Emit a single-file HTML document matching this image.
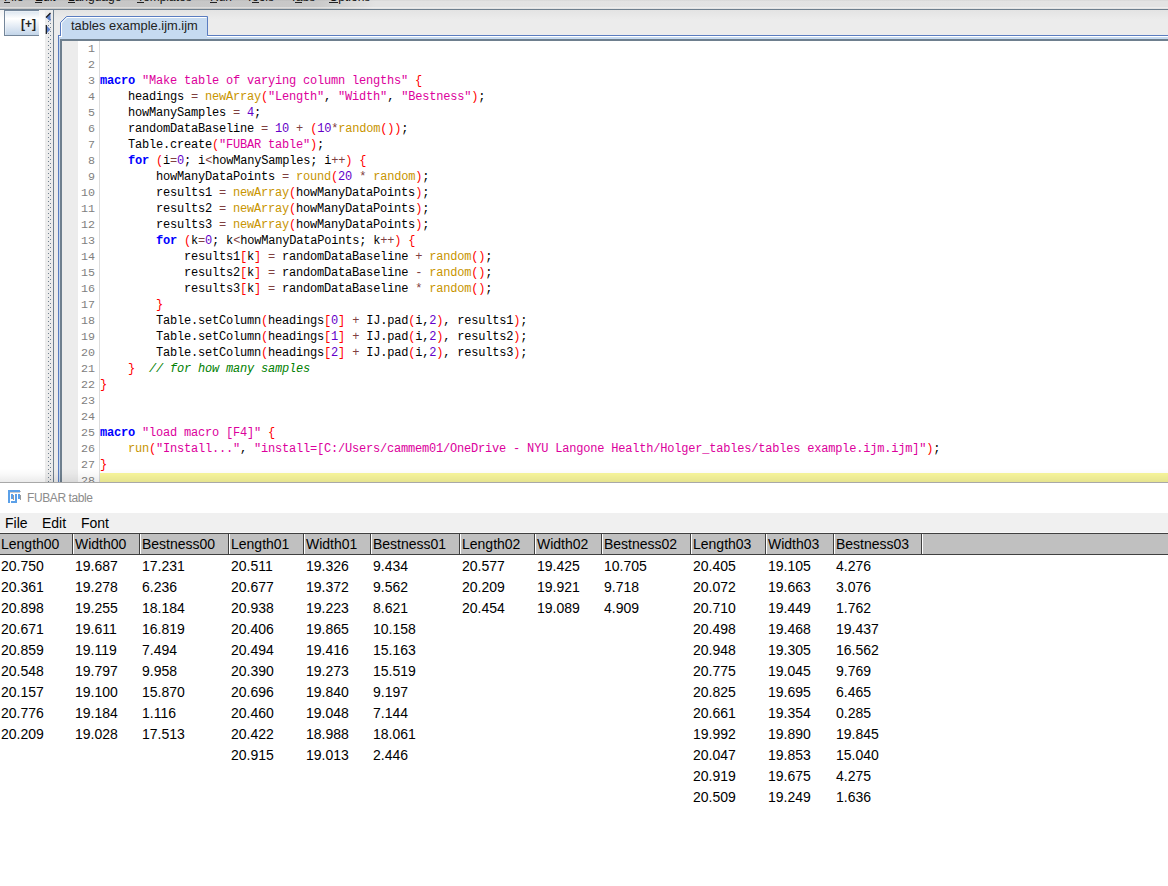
<!DOCTYPE html>
<html><head><meta charset="utf-8">
<style>
*{margin:0;padding:0;box-sizing:border-box}
html,body{width:1168px;height:886px;overflow:hidden;background:#fff;position:relative;font-family:"Liberation Sans",sans-serif}
.a{position:absolute}
#menubar{left:0;top:0;width:1168px;height:9px;background:linear-gradient(to right,#c6c6c6 0,#c8c8c8 315px,#e2e2e2 375px,#e3e3e3 100%);overflow:hidden}
#menubar b{position:absolute;left:0;width:1168px;height:1px}
#menubar span{position:absolute;top:-10px;font-size:12px;line-height:normal;color:#111;white-space:pre}
#menubar i{position:absolute;top:2px;height:1px;background:#222}
#topline{left:0;top:9px;width:1168px;height:1px;background:#6e7f8e}
#leftpanel{left:0;top:10px;width:45px;height:472px;background:linear-gradient(#f2f2f2,#fff 10px)}
#plusbtn{left:4px;top:10px;width:35px;height:26px;border:1px solid #74869a;border-right:none;background:linear-gradient(#dae4ef,#ffffff 32%,#c3d5e9);box-shadow:inset 1px 1px 0 rgba(255,255,255,0.35)}
#plustxt{left:21px;top:17px;font-size:12px;font-weight:bold;color:#222}
#splitter{left:45px;top:10px;width:8px;height:472px;background:#ececec}
#splitline{left:53px;top:10px;width:1px;height:472px;background:#6e7f8e}
#tabarea{left:54px;top:10px;width:1114px;height:25px;background:linear-gradient(#e3e3e3,#ececec 40%)}
#tabside{left:54px;top:35px;width:4px;height:447px;background:#ececec}
#tab{left:60px;top:16px;width:148px;height:20px}
#tabtxt{left:71px;top:18px;font-size:12.9px;color:#222;white-space:pre}
#edtop{left:58px;top:35px;width:1110px;height:1px;background:#5a7cc0}
#edleft{left:58px;top:35px;width:1px;height:447px;background:#5a7cc0}
#edwhite{left:59px;top:36px;width:1109px;height:1px;background:#fff}
#edlb{left:59px;top:37px;width:1109px;height:2px;background:#c6daf0}
#edlb2{left:59px;top:36px;width:1px;height:446px;background:#c6daf0}
#eddark{left:60px;top:39px;width:1108px;height:2px;background:#6e7f8e}
#eddark2{left:60px;top:39px;width:2px;height:443px;background:#6e7f8e}
#gutter{left:62px;top:41px;width:16px;height:441px;background:#ececec}
#lnarea{left:78px;top:41px;width:21px;height:441px;background:#fff}
#lnsep{left:99px;top:41px;width:1px;height:441px;background:#dcdcdc}
#curline{left:100px;top:473px;width:1068px;height:9px;background:#f9f79c}
#nums{left:60px;top:41px;width:35px;text-align:right;font-family:"Liberation Mono",monospace;font-size:11.67px;line-height:16px;color:#808080;white-space:pre}
#code{left:100px;top:41px;font-family:"Liberation Mono",monospace;font-size:12px;letter-spacing:-0.2px;line-height:16px;color:#000;white-space:pre}
#clip{left:0;top:0;width:1168px;height:482px;overflow:hidden}
.k{color:#0000ff;font-weight:bold}
.s{color:#dc009c}
.f{color:#c89500}
.n{color:#6400c8}
.p{color:#ff0000}
.o{color:#804040}
.c{color:#008000;font-style:italic}
#edbottom{left:0;top:482px;width:1168px;height:1px;background:#a8a8a8}
#title{left:0;top:483px;width:1168px;height:30px;background:#fff}
#titletxt{left:27px;top:491px;font-size:12px;letter-spacing:-0.4px;color:#8c8c8c;white-space:pre}
#tmenu{left:0;top:513px;width:1168px;height:20px;background:#f0f0f0}
#tmenu span{position:absolute;top:2px;font-size:14px;color:#000}
#thead{left:0;top:532px;width:1168px;height:23px;background:#c0c0c0;border-top:1px solid #f8f8f8}
#thead .hl{position:absolute;left:0;top:0;width:1168px;height:1px;background:#404040}
#thead .hb{position:absolute;left:0;top:21px;width:1168px;height:1px;background:#404040}
.h{position:absolute;top:3px;font-size:14px;color:#000;padding-left:1px;white-space:pre}
.sep{position:absolute;top:1px;width:2px;height:20px;border-left:1px solid #404040;border-right:1px solid #fff}
.d{position:absolute;font-size:14px;color:#000;padding-left:1px;line-height:21px;white-space:pre}
</style></head><body>
<div id="clip" class="a">
<div id="menubar" class="a"><b style="top:0;background:rgba(0,0,0,0.03)"></b><b style="top:7px;background:rgba(255,255,255,0.4)"></b><b style="top:8px;background:rgba(255,255,255,0.05)"></b><span style="left:4px">File</span><i style="left:4px;width:6px"></i><span style="left:35px">Edit</span><i style="left:35px;width:7px"></i><span style="left:68px">Language</span><i style="left:68px;width:7px"></i><span style="left:137px">Templates</span><i style="left:137px;width:7px"></i><span style="left:210px">Run</span><i style="left:210px;width:7px"></i><span style="left:246px">Tools</span><i style="left:252px;width:7px"></i><span style="left:290px">Tabs</span><i style="left:295px;width:7px"></i><span style="left:329px">Options</span><i style="left:329px;width:9px"></i></div>
<div id="topline" class="a"></div>
<div id="leftpanel" class="a"></div>
<div id="plusbtn" class="a"></div>
<div id="plustxt" class="a">[+]</div>
<div id="splitter" class="a"></div>
<svg class="a" style="left:45px;top:10px" width="8" height="472">
<defs><pattern id="dots" x="0" y="0" width="8" height="4" patternUnits="userSpaceOnUse"><rect x="3" y="3" width="1" height="1" fill="#6e7f8e"/><rect x="5" y="1" width="1" height="1" fill="#6e7f8e"/></pattern></defs>
<rect x="0" y="9" width="8" height="463" fill="url(#dots)"/>
<path d="M5.5 3 L1 7.5 L5.5 11.5 Z" fill="#5b7fc8"/><path d="M5.5 3 L1 7.5" stroke="#1a1a1a" stroke-width="1.2"/>
<path d="M1 15 L5.5 19.5 L1 24 Z" fill="#5b7fc8"/><path d="M1.3 15 L1.3 24" stroke="#1a1a1a" stroke-width="1.2"/>
</svg>
<div id="splitline" class="a"></div>
<div id="tabarea" class="a"></div>
<div id="tabside" class="a"></div>

<div id="edtop" class="a"></div>
<div id="edleft" class="a"></div>
<div id="edwhite" class="a"></div><div id="edlb" class="a"></div>
<div id="edlb2" class="a"></div>
<div id="eddark" class="a"></div>
<div id="eddark2" class="a"></div>
<svg class="a" style="left:58px;top:14px" width="152" height="25">
<path d="M2.5 21.5 L2.5 8.5 L8.5 2.5 L149.5 2.5 L149.5 21.5" fill="#c6daf0" stroke="#5a7cc0" stroke-width="1"/>
<path d="M3.5 22 L3.5 9 L9 3.5 L148.5 3.5" fill="none" stroke="#fff" stroke-width="1"/>
<rect x="0" y="21" width="3" height="1" fill="#5a7cc0"/>
<rect x="1" y="22" width="2" height="1" fill="#fff"/>
<rect x="4" y="21" width="145" height="4" fill="#c6daf0"/>
<rect x="149" y="22" width="3" height="1" fill="#fff"/>
</svg>
<div id="tabtxt" class="a">tables example.ijm.ijm</div>
<div id="gutter" class="a"></div>
<div id="lnarea" class="a"></div>
<div id="lnsep" class="a"></div>
<div id="curline" class="a"></div>
<div id="nums" class="a">1
2
3
4
5
6
7
8
9
10
11
12
13
14
15
16
17
18
19
20
21
22
23
24
25
26
27
28</div>
<div id="code" class="a">

<b class="k">macro</b> <span class="s">&quot;Make table of varying column lengths&quot;</span> <span class="p">{</span>
    headings <span class="o">=</span> <span class="f">newArray</span><span class="p">(</span><span class="s">&quot;Length&quot;</span>, <span class="s">&quot;Width&quot;</span>, <span class="s">&quot;Bestness&quot;</span><span class="p">)</span>;
    howManySamples <span class="o">=</span> <span class="n">4</span>;
    randomDataBaseline <span class="o">=</span> <span class="n">10</span> <span class="o">+</span> <span class="p">(</span><span class="n">10</span><span class="o">*</span><span class="f">random</span><span class="p">(</span><span class="p">)</span><span class="p">)</span>;
    Table.create<span class="p">(</span><span class="s">&quot;FUBAR table&quot;</span><span class="p">)</span>;
    <b class="k">for</b> <span class="p">(</span>i<span class="o">=</span><span class="n">0</span>; i<span class="o">&lt;</span>howManySamples; i<span class="o">++</span><span class="p">)</span> <span class="p">{</span>
        howManyDataPoints <span class="o">=</span> <span class="f">round</span><span class="p">(</span><span class="n">20</span> <span class="o">*</span> <span class="f">random</span><span class="p">)</span>;
        results1 <span class="o">=</span> <span class="f">newArray</span><span class="p">(</span>howManyDataPoints<span class="p">)</span>;
        results2 <span class="o">=</span> <span class="f">newArray</span><span class="p">(</span>howManyDataPoints<span class="p">)</span>;
        results3 <span class="o">=</span> <span class="f">newArray</span><span class="p">(</span>howManyDataPoints<span class="p">)</span>;
        <b class="k">for</b> <span class="p">(</span>k<span class="o">=</span><span class="n">0</span>; k<span class="o">&lt;</span>howManyDataPoints; k<span class="o">++</span><span class="p">)</span> <span class="p">{</span>
            results1<span class="p">[</span>k<span class="p">]</span> <span class="o">=</span> randomDataBaseline <span class="o">+</span> <span class="f">random</span><span class="p">(</span><span class="p">)</span>;
            results2<span class="p">[</span>k<span class="p">]</span> <span class="o">=</span> randomDataBaseline <span class="o">-</span> <span class="f">random</span><span class="p">(</span><span class="p">)</span>;
            results3<span class="p">[</span>k<span class="p">]</span> <span class="o">=</span> randomDataBaseline <span class="o">*</span> <span class="f">random</span><span class="p">(</span><span class="p">)</span>;
        <span class="p">}</span>
        Table.setColumn<span class="p">(</span>headings<span class="p">[</span><span class="n">0</span><span class="p">]</span> <span class="o">+</span> IJ.pad<span class="p">(</span>i,<span class="n">2</span><span class="p">)</span>, results1<span class="p">)</span>;
        Table.setColumn<span class="p">(</span>headings<span class="p">[</span><span class="n">1</span><span class="p">]</span> <span class="o">+</span> IJ.pad<span class="p">(</span>i,<span class="n">2</span><span class="p">)</span>, results2<span class="p">)</span>;
        Table.setColumn<span class="p">(</span>headings<span class="p">[</span><span class="n">2</span><span class="p">]</span> <span class="o">+</span> IJ.pad<span class="p">(</span>i,<span class="n">2</span><span class="p">)</span>, results3<span class="p">)</span>;
    <span class="p">}</span>  <i class="c">// for how many samples</i>
<span class="p">}</span>


<b class="k">macro</b> <span class="s">&quot;load macro [F4]&quot;</span> <span class="p">{</span>
    <span class="f">run</span><span class="p">(</span><span class="s">&quot;Install...&quot;</span>, <span class="s">&quot;install=[C:/Users/cammem01/OneDrive - NYU Langone Health/Holger_tables/tables example.ijm.ijm]&quot;</span><span class="p">)</span>;
<span class="p">}</span>
</div>
</div>
<div class="a" style="left:0;top:468px;width:1168px;height:14px;background:linear-gradient(rgba(0,0,0,0),rgba(0,0,0,0.02) 40%,rgba(0,0,0,0.08))"></div>
<div id="edbottom" class="a"></div>
<div id="title" class="a"></div>
<svg class="a" style="left:8px;top:490px" width="14" height="14">
<g fill="#9a9a9a"><rect x="5" y="5" width="1" height="5"/><rect x="12" y="5" width="1" height="5"/><rect x="2" y="2" width="10" height="1" opacity="0.5"/><rect x="12" y="1" width="1" height="1" opacity="0.6"/></g>
<g fill="#5ba0e8"><rect x="0" y="0" width="12" height="2"/><rect x="0" y="0" width="2" height="13"/><rect x="3" y="4" width="2" height="5"/><rect x="7" y="4" width="2" height="9"/><rect x="3" y="11" width="6" height="2"/><rect x="10" y="4" width="2" height="5"/></g>
</svg>
<div id="titletxt" class="a">FUBAR table</div>
<div id="tmenu" class="a"><span style="left:5px">File</span><span style="left:42px">Edit</span><span style="left:81px">Font</span></div>
<div id="thead" class="a"><div class="hl"></div><div class="hb"></div><div class="h" style="left:0px">Length00</div><div class="h" style="left:74px">Width00</div><div class="h" style="left:141px">Bestness00</div><div class="h" style="left:230px">Length01</div><div class="h" style="left:305px">Width01</div><div class="h" style="left:372px">Bestness01</div><div class="h" style="left:461px">Length02</div><div class="h" style="left:536px">Width02</div><div class="h" style="left:603px">Bestness02</div><div class="h" style="left:692px">Length03</div><div class="h" style="left:767px">Width03</div><div class="h" style="left:835px">Bestness03</div><div class="sep" style="left:72px"></div><div class="sep" style="left:139px"></div><div class="sep" style="left:228px"></div><div class="sep" style="left:303px"></div><div class="sep" style="left:370px"></div><div class="sep" style="left:459px"></div><div class="sep" style="left:534px"></div><div class="sep" style="left:601px"></div><div class="sep" style="left:690px"></div><div class="sep" style="left:765px"></div><div class="sep" style="left:833px"></div><div class="sep" style="left:921px"></div></div>
<div class="d" style="left:0px;top:556px">20.750</div>
<div class="d" style="left:0px;top:577px">20.361</div>
<div class="d" style="left:0px;top:598px">20.898</div>
<div class="d" style="left:0px;top:619px">20.671</div>
<div class="d" style="left:0px;top:640px">20.859</div>
<div class="d" style="left:0px;top:661px">20.548</div>
<div class="d" style="left:0px;top:682px">20.157</div>
<div class="d" style="left:0px;top:703px">20.776</div>
<div class="d" style="left:0px;top:724px">20.209</div>
<div class="d" style="left:74px;top:556px">19.687</div>
<div class="d" style="left:74px;top:577px">19.278</div>
<div class="d" style="left:74px;top:598px">19.255</div>
<div class="d" style="left:74px;top:619px">19.611</div>
<div class="d" style="left:74px;top:640px">19.119</div>
<div class="d" style="left:74px;top:661px">19.797</div>
<div class="d" style="left:74px;top:682px">19.100</div>
<div class="d" style="left:74px;top:703px">19.184</div>
<div class="d" style="left:74px;top:724px">19.028</div>
<div class="d" style="left:141px;top:556px">17.231</div>
<div class="d" style="left:141px;top:577px">6.236</div>
<div class="d" style="left:141px;top:598px">18.184</div>
<div class="d" style="left:141px;top:619px">16.819</div>
<div class="d" style="left:141px;top:640px">7.494</div>
<div class="d" style="left:141px;top:661px">9.958</div>
<div class="d" style="left:141px;top:682px">15.870</div>
<div class="d" style="left:141px;top:703px">1.116</div>
<div class="d" style="left:141px;top:724px">17.513</div>
<div class="d" style="left:230px;top:556px">20.511</div>
<div class="d" style="left:230px;top:577px">20.677</div>
<div class="d" style="left:230px;top:598px">20.938</div>
<div class="d" style="left:230px;top:619px">20.406</div>
<div class="d" style="left:230px;top:640px">20.494</div>
<div class="d" style="left:230px;top:661px">20.390</div>
<div class="d" style="left:230px;top:682px">20.696</div>
<div class="d" style="left:230px;top:703px">20.460</div>
<div class="d" style="left:230px;top:724px">20.422</div>
<div class="d" style="left:230px;top:745px">20.915</div>
<div class="d" style="left:305px;top:556px">19.326</div>
<div class="d" style="left:305px;top:577px">19.372</div>
<div class="d" style="left:305px;top:598px">19.223</div>
<div class="d" style="left:305px;top:619px">19.865</div>
<div class="d" style="left:305px;top:640px">19.416</div>
<div class="d" style="left:305px;top:661px">19.273</div>
<div class="d" style="left:305px;top:682px">19.840</div>
<div class="d" style="left:305px;top:703px">19.048</div>
<div class="d" style="left:305px;top:724px">18.988</div>
<div class="d" style="left:305px;top:745px">19.013</div>
<div class="d" style="left:372px;top:556px">9.434</div>
<div class="d" style="left:372px;top:577px">9.562</div>
<div class="d" style="left:372px;top:598px">8.621</div>
<div class="d" style="left:372px;top:619px">10.158</div>
<div class="d" style="left:372px;top:640px">15.163</div>
<div class="d" style="left:372px;top:661px">15.519</div>
<div class="d" style="left:372px;top:682px">9.197</div>
<div class="d" style="left:372px;top:703px">7.144</div>
<div class="d" style="left:372px;top:724px">18.061</div>
<div class="d" style="left:372px;top:745px">2.446</div>
<div class="d" style="left:461px;top:556px">20.577</div>
<div class="d" style="left:461px;top:577px">20.209</div>
<div class="d" style="left:461px;top:598px">20.454</div>
<div class="d" style="left:536px;top:556px">19.425</div>
<div class="d" style="left:536px;top:577px">19.921</div>
<div class="d" style="left:536px;top:598px">19.089</div>
<div class="d" style="left:603px;top:556px">10.705</div>
<div class="d" style="left:603px;top:577px">9.718</div>
<div class="d" style="left:603px;top:598px">4.909</div>
<div class="d" style="left:692px;top:556px">20.405</div>
<div class="d" style="left:692px;top:577px">20.072</div>
<div class="d" style="left:692px;top:598px">20.710</div>
<div class="d" style="left:692px;top:619px">20.498</div>
<div class="d" style="left:692px;top:640px">20.948</div>
<div class="d" style="left:692px;top:661px">20.775</div>
<div class="d" style="left:692px;top:682px">20.825</div>
<div class="d" style="left:692px;top:703px">20.661</div>
<div class="d" style="left:692px;top:724px">19.992</div>
<div class="d" style="left:692px;top:745px">20.047</div>
<div class="d" style="left:692px;top:766px">20.919</div>
<div class="d" style="left:692px;top:787px">20.509</div>
<div class="d" style="left:767px;top:556px">19.105</div>
<div class="d" style="left:767px;top:577px">19.663</div>
<div class="d" style="left:767px;top:598px">19.449</div>
<div class="d" style="left:767px;top:619px">19.468</div>
<div class="d" style="left:767px;top:640px">19.305</div>
<div class="d" style="left:767px;top:661px">19.045</div>
<div class="d" style="left:767px;top:682px">19.695</div>
<div class="d" style="left:767px;top:703px">19.354</div>
<div class="d" style="left:767px;top:724px">19.890</div>
<div class="d" style="left:767px;top:745px">19.853</div>
<div class="d" style="left:767px;top:766px">19.675</div>
<div class="d" style="left:767px;top:787px">19.249</div>
<div class="d" style="left:835px;top:556px">4.276</div>
<div class="d" style="left:835px;top:577px">3.076</div>
<div class="d" style="left:835px;top:598px">1.762</div>
<div class="d" style="left:835px;top:619px">19.437</div>
<div class="d" style="left:835px;top:640px">16.562</div>
<div class="d" style="left:835px;top:661px">9.769</div>
<div class="d" style="left:835px;top:682px">6.465</div>
<div class="d" style="left:835px;top:703px">0.285</div>
<div class="d" style="left:835px;top:724px">19.845</div>
<div class="d" style="left:835px;top:745px">15.040</div>
<div class="d" style="left:835px;top:766px">4.275</div>
<div class="d" style="left:835px;top:787px">1.636</div>
</body></html>
